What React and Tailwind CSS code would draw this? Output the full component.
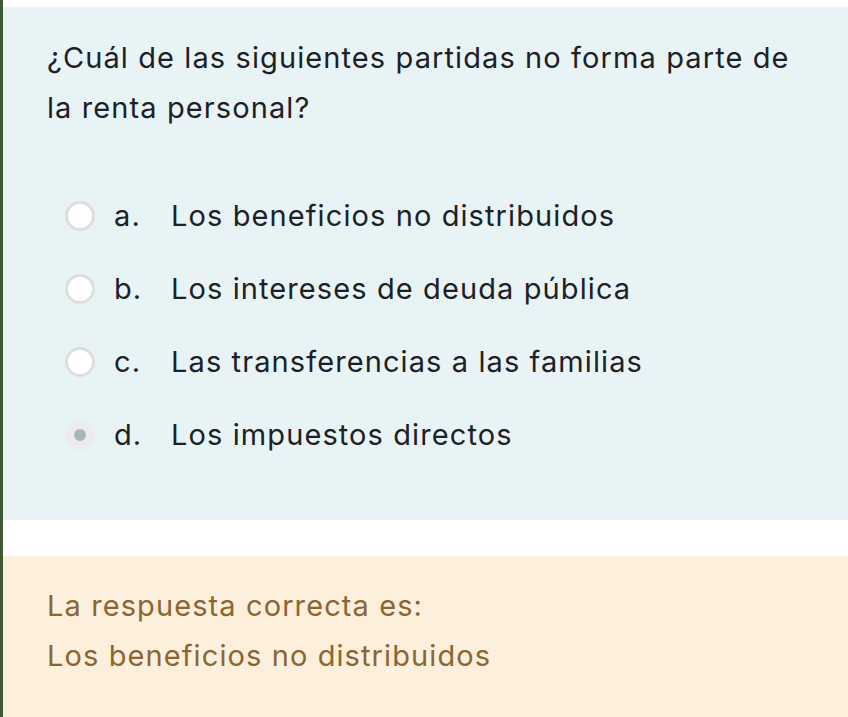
const options = [
  { letter: "a.", text: "Los beneficios no distribuidos" },
  { letter: "b.", text: "Los intereses de deuda pública" },
  { letter: "c.", text: "Las transferencias a las familias" },
  { letter: "d.", text: "Los impuestos directos", selected: true },
];

const Radio = ({ selected }) =>
  selected ? (
    <span className="flex h-[30px] w-[30px] shrink-0 items-center justify-center rounded-full bg-[#ececec]">
      <span className="h-[12px] w-[12px] rounded-full bg-[#a9b6ba]" />
    </span>
  ) : (
    <span className="h-[30px] w-[30px] shrink-0 rounded-full border-[3px] border-[#dedede] bg-white" />
  );

export default function App() {
  return (
    <div
      className="flex min-h-[717px] w-[848px] border-l-[3px] border-[#3f5a33] bg-white"
      style={{ fontFamily: 'Inter, "Liberation Sans", Arial, sans-serif' }}
    >
      <div className="flex flex-1 flex-col pt-[7px]">
        {/* question */}
        <div className="bg-[#e7f3f5] pl-[44px] pr-[50px] pt-[26px] pb-[70px] text-[29px] tracking-[1.1px] text-[#1d2125]">
          <p className="leading-[50px]">
            ¿Cuál de las siguientes partidas no forma parte de la renta personal?
          </p>
          <div className="mt-[68px] flex flex-col gap-[43px] pl-[18px]">
            {options.map((o) => (
              <div key={o.letter} className="flex h-[30px] items-center">
                <Radio selected={o.selected} />
                <span className="ml-[19px] w-[57px]">{o.letter}</span>
                <span>{o.text}</span>
              </div>
            ))}
          </div>
        </div>

        <div className="h-[36px]" />

        {/* feedback */}
        <div className="flex-1 bg-[#fcefdc] pl-[44px] pt-[25px] pb-[30px] text-[29px] leading-[50px] tracking-[1.1px] text-[#8c6530]">
          <p>La respuesta correcta es:</p>
          <p>Los beneficios no distribuidos</p>
        </div>
      </div>
    </div>
  );
}
